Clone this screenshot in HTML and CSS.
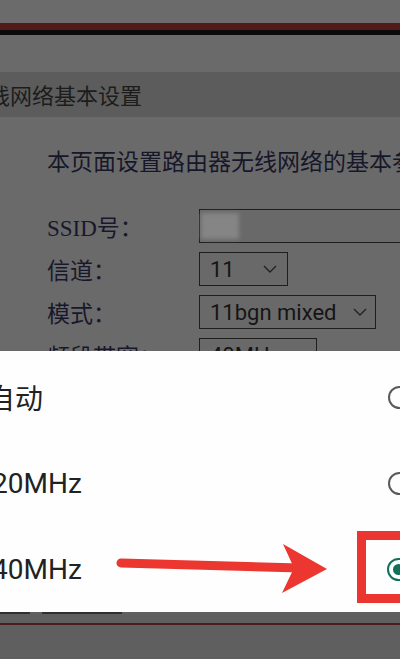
FILE: index.html
```html
<!DOCTYPE html>
<html lang="zh-CN">
<head>
    <meta charset="UTF-8">
    <meta name="viewport" content="width=device-width, initial-scale=1.0">
    <title>无线网络基本设置</title>
    <link rel="stylesheet" href="styles.css">
</head>
<body>
    <div class="page">
        <div class="top-strip"></div>
        <div class="red-line"></div>
        <div class="black-line"></div>

        <div class="section-title">无线网络基本设置</div>

        <div class="content">
            <p class="intro">本页面设置路由器无线网络的基本参数。</p>

            <div class="form">
                <label class="label">SSID号：</label>
                <div class="field text-field">
                    <span class="blurred"></span>
                </div>

                <label class="label">信道：</label>
                <div class="field select w-channel">
                    <span>11</span>
                    <svg class="chevron" viewBox="0 0 14 8"><path d="M1 1 L7 7 L13 1"/></svg>
                </div>

                <label class="label">模式：</label>
                <div class="field select w-mode">
                    <span>11bgn mixed</span>
                    <svg class="chevron" viewBox="0 0 14 8"><path d="M1 1 L7 7 L13 1"/></svg>
                </div>

                <label class="label">频段带宽：</label>
                <div class="field select w-band">
                    <span>40MHz</span>
                    <svg class="chevron" viewBox="0 0 14 8"><path d="M1 1 L7 7 L13 1"/></svg>
                </div>
            </div>
        </div>
    </div>

    <div class="sheet">
        <div class="option">
            <span class="option-text cjk">自动</span>
            <span class="radio"></span>
        </div>
        <div class="option">
            <span class="option-text">20MHz</span>
            <span class="radio"></span>
        </div>
        <div class="option">
            <span class="option-text">40MHz</span>
            <span class="radio checked"></span>
        </div>

        <!-- annotation drawn over the sheet -->
        <svg class="arrow" viewBox="0 0 400 261">
            <line x1="121" y1="212" x2="300" y2="217" stroke="#ec3730" stroke-width="9" stroke-linecap="round"/>
            <polygon points="283,193 327,218 282,242 294,217" fill="#ec3730"/>
        </svg>
        <div class="highlight"></div>
    </div>

    <div class="footer">
        <div class="footer-edge">
            <span class="edge-a"></span>
            <span class="edge-b"></span>
        </div>
        <div class="footer-line"></div>
    </div>
</body>
</html>
```

FILE: styles.css
```css
body {
    margin: 0;
    width: 400px;
    height: 659px;
    overflow: hidden;
    background-color: #5f5f5f;
    font-family: "Liberation Serif", "Noto Sans CJK SC", serif;
}
.page {
    height: 351px;
    overflow: hidden;
    background-color: #6a6a6a;
}
.top-strip {
    height: 23px;
    background-color: #6b6b6b;
}
.red-line {
    height: 7px;
    background-color: #531a1a;
}
.black-line {
    height: 5px;
    background-color: #0b0b0b;
}
.section-title {
    margin-top: 37px;
    height: 45px;
    line-height: 45px;
    background-color: #5c5c5c;
    color: #1c1c1c;
    font-family: "Noto Sans CJK SC", sans-serif;
    font-size: 22px;
    text-indent: -34px;
    white-space: nowrap;
    overflow: hidden;
}
.content {
    padding-left: 47px;
}
.intro {
    margin: 28px 0 0;
    line-height: 30px;
    font-family: "Noto Sans CJK SC", sans-serif;
    font-size: 23px;
    color: #17172a;
    white-space: nowrap;
}
.form {
    margin-top: 34px;
    display: grid;
    grid-template-columns: 152px auto;
    row-gap: 9px;
    align-items: center;
}
.label {
    font-size: 23px;
    color: #18182c;
    white-space: nowrap;
}
.field {
    box-sizing: border-box;
    height: 34px;
    border: 1.5px solid #1e1e1e;
    background-color: #696969;
    display: flex;
    align-items: center;
    padding: 0 10px;
    font-family: Roboto, sans-serif;
    font-size: 22px;
    color: #151515;
}
.text-field {
    width: 240px;
    padding-left: 1px;
}
.blurred {
    width: 38px;
    height: 26px;
    background-color: #858585;
    filter: blur(2px);
}
.select {
    justify-content: space-between;
}
.w-channel {
    width: 89px;
}
.w-mode {
    width: 177px;
    padding-right: 8px;
}
.w-band {
    width: 118px;
}
.chevron {
    width: 14px;
    height: 8px;
    fill: none;
    stroke: #222;
    stroke-width: 1.4;
}
.sheet {
    position: relative;
    padding-top: 3px;
    background-color: #fefefe;
    overflow: hidden;
}
.option {
    height: 86px;
    display: flex;
    align-items: center;
    justify-content: space-between;
}
.option-text {
    font-family: Roboto, "Noto Sans CJK SC", sans-serif;
    font-size: 28px;
    color: #222;
    margin-left: -8px;
}
.option-text.cjk {
    margin-left: -13px;
}
.radio {
    box-sizing: border-box;
    width: 23px;
    height: 23px;
    border: 2.5px solid #5a5a5a;
    border-radius: 50%;
    margin-right: -11px;
    display: flex;
    align-items: center;
    justify-content: center;
}
.radio.checked {
    border-color: #12705a;
    margin-right: -10px;
}
.radio.checked::after {
    content: "";
    width: 11px;
    height: 11px;
    border-radius: 50%;
    background-color: #12705a;
}
.arrow {
    position: absolute;
    top: 0;
    left: 0;
    width: 400px;
    height: 261px;
}
.highlight {
    position: absolute;
    left: 357px;
    top: 180px;
    width: 60px;
    height: 72px;
    box-sizing: border-box;
    border: 9px solid #ea3530;
}
.footer {
    height: 47px;
    background-color: #5f5f5f;
}
.footer-edge {
    display: flex;
    height: 2px;
}
.edge-a {
    width: 30px;
    background-color: #2f2f2f;
}
.edge-b {
    width: 80px;
    margin-left: 12px;
    background-color: #2f2f2f;
}
.footer-line {
    margin-top: 9px;
    height: 2px;
    background-color: #4a1c1c;
}
```
